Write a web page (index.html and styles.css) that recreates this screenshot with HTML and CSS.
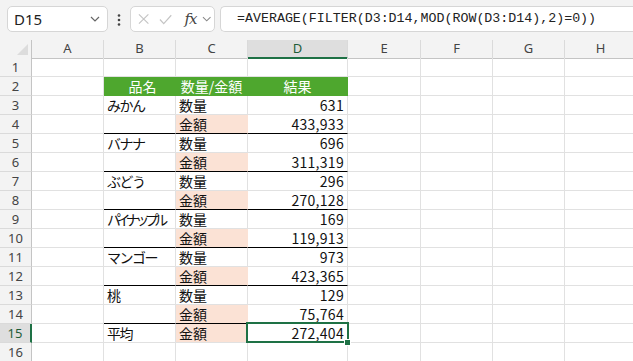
FILE: index.html
```html
<!DOCTYPE html>
<html lang="ja">
<head>
  <meta charset="UTF-8">
  <title>AVERAGE FILTER</title>
  <link rel="stylesheet" href="styles.css">
</head>
<body>
  <div class="app">
    <div class="toolbar">
      <div class="namebox">
        <span>D15</span>
        <svg class="chev" width="10" height="6" viewBox="0 0 10 6"><path d="M1 1l4 4 4-4" fill="none" stroke="#666" stroke-width="1.2"/></svg>
      </div>
      <svg class="dots" width="4" height="12" viewBox="0 0 4 12"><circle cx="2" cy="1.5" r="1.3"/><circle cx="2" cy="6" r="1.3"/><circle cx="2" cy="10.5" r="1.3"/></svg>
      <div class="fxbox">
        <svg width="12" height="12" viewBox="0 0 12 12"><path d="M1 1l10 10M11 1L1 11" stroke="#c4c4c4" stroke-width="1.2"/></svg>
        <svg width="14" height="11" viewBox="0 0 14 11"><path d="M1 5.5l4 4.5 8-9" fill="none" stroke="#c4c4c4" stroke-width="1.2"/></svg>
        <span class="fx">fx</span>
        <svg width="10" height="6" viewBox="0 0 10 6"><path d="M1 1l4 4 4-4" fill="none" stroke="#888" stroke-width="1.1"/></svg>
      </div>
      <div class="formula">=AVERAGE(FILTER(D3:D14,MOD(ROW(D3:D14),2)=0))</div>
    </div>

    <div class="sheet">
      <div class="row head">
        <div class="corner"></div><div>A</div><div>B</div><div>C</div><div class="sel">D</div><div>E</div><div>F</div><div>G</div><div>H</div>
      </div>
      <div class="row"><div class="rh">1</div><div></div><div></div><div></div><div></div><div></div><div></div><div></div><div></div></div>
      <div class="row"><div class="rh">2</div><div></div><div class="th">品名</div><div class="th">数量/金額</div><div class="th">結果</div><div></div><div></div><div></div><div></div></div>
      <div class="row"><div class="rh">3</div><div></div><div class="name">みかん</div><div class="t">数量</div><div class="n">631</div><div></div><div></div><div></div><div></div></div>
      <div class="row"><div class="rh">4</div><div></div><div class="end"></div><div class="t amt end">金額</div><div class="n end">433,933</div><div></div><div></div><div></div><div></div></div>
      <div class="row"><div class="rh">5</div><div></div><div class="name">バナナ</div><div class="t">数量</div><div class="n">696</div><div></div><div></div><div></div><div></div></div>
      <div class="row"><div class="rh">6</div><div></div><div class="end"></div><div class="t amt end">金額</div><div class="n end">311,319</div><div></div><div></div><div></div><div></div></div>
      <div class="row"><div class="rh">7</div><div></div><div class="name">ぶどう</div><div class="t">数量</div><div class="n">296</div><div></div><div></div><div></div><div></div></div>
      <div class="row"><div class="rh">8</div><div></div><div class="end"></div><div class="t amt end">金額</div><div class="n end">270,128</div><div></div><div></div><div></div><div></div></div>
      <div class="row"><div class="rh">9</div><div></div><div class="name long">パイナップル</div><div class="t">数量</div><div class="n">169</div><div></div><div></div><div></div><div></div></div>
      <div class="row"><div class="rh">10</div><div></div><div class="end"></div><div class="t amt end">金額</div><div class="n end">119,913</div><div></div><div></div><div></div><div></div></div>
      <div class="row"><div class="rh">11</div><div></div><div class="name">マンゴー</div><div class="t">数量</div><div class="n">973</div><div></div><div></div><div></div><div></div></div>
      <div class="row"><div class="rh">12</div><div></div><div class="end"></div><div class="t amt end">金額</div><div class="n end">423,365</div><div></div><div></div><div></div><div></div></div>
      <div class="row"><div class="rh">13</div><div></div><div class="name">桃</div><div class="t">数量</div><div class="n">129</div><div></div><div></div><div></div><div></div></div>
      <div class="row"><div class="rh">14</div><div></div><div class="end"></div><div class="t amt end">金額</div><div class="n end">75,764</div><div></div><div></div><div></div><div></div></div>
      <div class="row"><div class="rh selrow">15</div><div></div><div class="name">平均</div><div class="t amt">金額</div><div class="n active">272,404</div><div></div><div></div><div></div><div></div></div>
      <div class="row"><div class="rh">16</div><div></div><div></div><div></div><div></div><div></div><div></div><div></div><div></div></div>
    </div>
  </div>
</body>
</html>
```

FILE: styles.css
```css
body { margin: 0; background: #fff; font-family: "Noto Sans CJK JP", sans-serif; overflow: hidden; }
.app { width: 633px; height: 361px; overflow: hidden; background: #f3f3f3; }

.toolbar { height: 40px; display: flex; align-items: flex-start; padding-top: 6px; box-sizing: border-box; }
.namebox { margin-left: 7px; width: 101px; height: 26px; box-sizing: border-box; background: #fff; border: 1px solid #d6d6d6; border-radius: 5px; display: flex; align-items: center; justify-content: space-between; padding: 0 7px 0 6px; font-family: "Noto Sans", sans-serif; font-size: 15px; color: #222; }
.namebox span { line-height: 1; }
.dots { fill: #444; margin: 8px 9px 0 9px; }
.fxbox { width: 85px; height: 26px; box-sizing: border-box; background: #fff; border: 1px solid #d6d6d6; border-radius: 5px; display: flex; align-items: center; padding: 0 3px 0 7px; }
.fxbox svg:nth-child(2) { margin-left: 10px; }
.fx { font-family: "DejaVu Serif", serif; font-style: italic; font-size: 15px; color: #444; margin-left: 12px; margin-right: 5px; letter-spacing: -1px; line-height: 1; }
.formula { margin-left: 5px; flex: 1; height: 26px; box-sizing: border-box; background: #fff; border: 1px solid #d6d6d6; border-right: none; border-radius: 5px 0 0 5px; padding-left: 16px; font-family: "Liberation Mono", monospace; font-size: 13.3px; line-height: 24px; color: #222; white-space: nowrap; }

.sheet { background: #fff; }
.row { display: grid; grid-template-columns: 32px 72px 72px 72px 100px 73px 72px 72px 72px; height: 19px; }
.row > div { box-sizing: border-box; border-right: 1px solid #e1e1e1; border-bottom: 1px solid #e1e1e1; font-size: 14px; line-height: 18px; color: #111; white-space: nowrap; overflow: visible; position: relative; }

.head { height: 18px; background: #f3f3f3; }
.head > div { border-right-color: #dadada; border-bottom-color: #c4c4c4; text-align: center; font-family: "Noto Sans", sans-serif; font-size: 13px; line-height: 17px; color: #444; }
.head .corner { border-right-color: #c4c4c4; }
.head .corner::after { content: ""; position: absolute; right: 3px; bottom: 3px; border-left: 11px solid transparent; border-bottom: 11px solid #dcdcdc; }
.head .sel { background: #dedede; border-bottom: 2px solid #1e7145; color: #1e5c38; }

.row .rh { background: #f3f3f3; border-right-color: #c4c4c4; border-bottom-color: #dadada; text-align: center; font-family: "Noto Sans", sans-serif; font-size: 13px; color: #444; }
.row .selrow { background: #dedede; border-right: 2px solid #1e7145; color: #1e5c38; }

.row .th { background: #4ea72e; border-color: #4ea72e; color: #fff; text-align: center; }
.row .th:nth-child(3) { padding-left: 6px; }
.row .name { padding-left: 3px; letter-spacing: -1.5px; }
.row .long { letter-spacing: -4.5px; }
.row .t { padding-left: 3px; }
.row .amt { background: #fbe2d5; border-right-color: #fbe2d5; }
.row .n { text-align: right; padding-right: 3px; letter-spacing: 0.3px; }
.row .active::after { content: ""; position: absolute; left: -2px; top: -2px; right: -2px; bottom: -1px; border: 2px solid #1e7145; }
.row .active::before { content: ""; position: absolute; right: -4px; bottom: -4px; width: 5px; height: 5px; background: #1e7145; border: 1px solid #fff; z-index: 1; }
.row .end { border-bottom-color: #000; }
```
